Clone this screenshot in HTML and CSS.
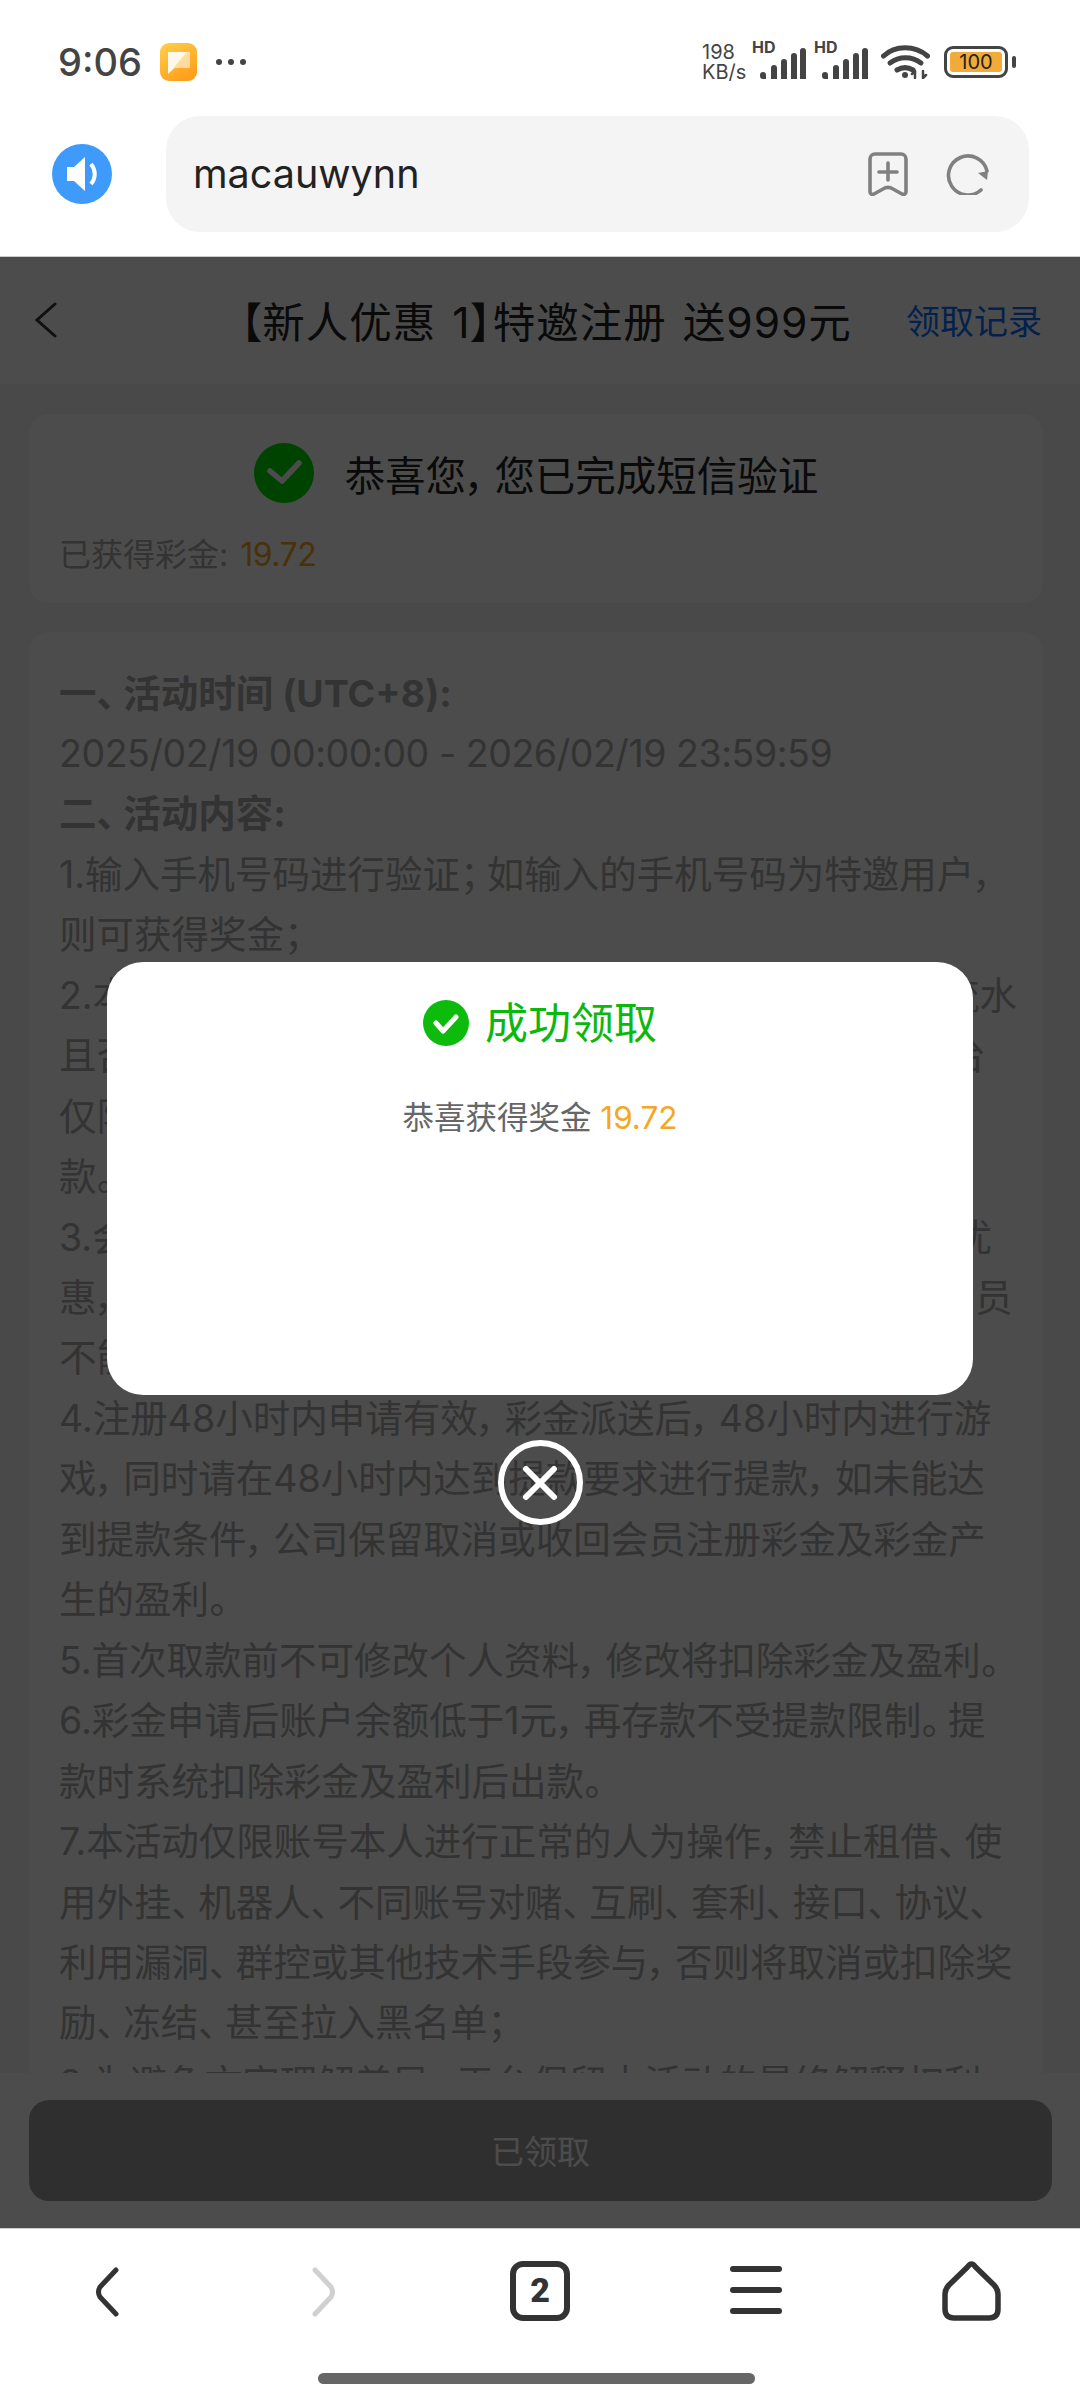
FILE: index.html
```html
<!DOCTYPE html>
<html lang="zh-CN">
<head>
    <meta charset="UTF-8">
    <meta name="viewport" content="width=device-width, initial-scale=1.0">
    <title>新人优惠</title>
    <link rel="stylesheet" href="styles.css">
</head>
<body>
<div class="screen">
    <!-- status bar -->
    <div class="status-bar">
        <div class="status-left">
            <span class="time">9:06</span>
            <svg class="notif-icon" width="37" height="38" viewBox="0 0 37 38">
                <defs>
                    <linearGradient id="notifGrad" x1="0" y1="0" x2="0.6" y2="1">
                        <stop offset="0" stop-color="#ffd04a"/>
                        <stop offset="1" stop-color="#ff9f1c"/>
                    </linearGradient>
                </defs>
                <rect width="37" height="38" rx="9" fill="url(#notifGrad)"/>
                <path d="M8 9h21a1 1 0 0 1 1 1v14a1 1 0 0 1-1 1H15l-7 6z" fill="#fff" opacity="0.55"/>
                <path d="M8 9h19L10 29l-2 2z" fill="#fff" opacity="0.8"/>
            </svg>
            <span class="dots"><i></i><i></i><i></i></span>
        </div>
        <div class="status-right">
            <div class="speed"><span>198</span><span>KB/s</span></div>
            <div class="sim">
                <span class="hd">HD</span>
                <svg width="46" height="31" viewBox="0 0 46 31"><path d="M3 31a3 3 0 0 1-3-3v-1a3 3 0 0 1 6 0v4zM11 31v-11a3 3 0 0 1 6 0v11zM21 31v-17a3 3 0 0 1 6 0v17zM31 31v-23a3 3 0 0 1 6 0v23zM40 31v-28a3 3 0 0 1 6 0v28z" fill="#444"/></svg>
            </div>
            <div class="sim">
                <span class="hd">HD</span>
                <svg width="46" height="31" viewBox="0 0 46 31"><path d="M3 31a3 3 0 0 1-3-3v-1a3 3 0 0 1 6 0v4zM11 31v-11a3 3 0 0 1 6 0v11zM21 31v-17a3 3 0 0 1 6 0v17zM31 31v-23a3 3 0 0 1 6 0v23zM40 31v-28a3 3 0 0 1 6 0v28z" fill="#444"/></svg>
            </div>
            <svg class="wifi" width="49" height="34" viewBox="0 0 49 34" fill="none" stroke="#444" stroke-width="5" stroke-linecap="round">
                <path d="M2.500 11C14 0 34 0 46.500 11"/>
                <path d="M9 18c9-7 22-7 31 0"/>
                <path d="M16 25c5-3 11-3 16 0"/>
                <circle cx="24" cy="30" r="3" fill="#444" stroke="none"/>
                <path d="M34 26v7M31 29l3-3M42 26v7M42 33l3-3" stroke-width="2.500"/>
            </svg>
            <div class="battery">
                <div class="battery-body"><span>100</span></div>
                <i class="battery-nub"></i>
            </div>
        </div>
    </div>

    <!-- browser bar -->
    <div class="browser-bar">
        <svg class="speaker" width="60" height="60" viewBox="0 0 60 60">
            <circle cx="30" cy="30" r="30" fill="#3f9bfb"/>
            <path d="M15 23h7l11-10v34l-11-10h-7z" fill="#fff"/>
            <path d="M39 20c5 6 5 14 0 20" fill="none" stroke="#fff" stroke-width="4"/>
        </svg>
        <div class="url-box">
            <span class="url-text">macauwynn</span>
            <div class="url-icons">
                <svg width="40" height="44" viewBox="0 0 40 44" fill="none" stroke="#808080" stroke-width="3.6" stroke-linecap="round" stroke-linejoin="round">
                    <path d="M7 2h26a5 5 0 0 1 5 5v33c0 2-2 3-4 2l-9-5c-3-2-7-2-10 0l-9 5c-2 1-4 0-4-2V7a5 5 0 0 1 5-5z"/>
                    <path d="M20 11v17M11 20h18"/>
                </svg>
                <svg width="43" height="42" viewBox="0 0 43 42" fill="none" stroke="#808080" stroke-width="3.6" stroke-linecap="round">
                    <path d="M35 37A19.5 19.5 0 1 1 41 18"/>
                    <path d="M32 20l9 7 1-9z" fill="#808080" stroke="none"/>
                </svg>
            </div>
        </div>
    </div>

    <!-- page -->
    <div class="page">
        <div class="page-header">
            <svg class="header-back" width="24" height="36" viewBox="0 0 24 36" fill="none" stroke="#333" stroke-width="3" stroke-linecap="round"><path d="M21 2L3 18l18 16"/></svg>
            <h1 class="header-title">【新人优惠 1】特邀注册 送999元</h1>
            <a class="header-link">领取记录</a>
        </div>

        <div class="page-scroll">
            <div class="card card-status">
                <div class="verify-row">
                    <svg width="60" height="60" viewBox="0 0 60 60">
                        <circle cx="30" cy="30" r="30" fill="#00e000"/>
                        <path d="M16 28l12 10 17-18" fill="none" stroke="#fff" stroke-width="5.500" stroke-linecap="round" stroke-linejoin="round"/>
                    </svg>
                    <span>恭喜您<span class="pu">，</span>您已完成短信验证</span>
                </div>
                <p class="earned">已获得彩金: <span class="amount">19.72</span></p>
            </div>

            <div class="card card-rules">
                <p><b>一<span class="pu">、</span>活动时间 (UTC+8):</b></p>
                <p class="date-range">2025/02/19 00:00:00 - 2026/02/19 23:59:59</p>
                <p><b>二<span class="pu">、</span>活动内容:</b></p>
                <p>1.输入手机号码进行验证<span class="pu">；</span>如输入的手机号码为特邀用户<span class="pu">，</span><br>则可获得奖金<span class="pu">；</span></p>
                <p>2.本活动需在指定场馆完成彩金100%的相应倍数有效流水<br>且否则无法进行提款<span class="pu">，</span>彩金可在所有指定场馆使用本平台<br>仅限会员本人账号参与<span class="pu">，</span>满足条件后方可申请提<br>款<span class="pu">。</span></p>
                <p>3.会员需保证账户信息真实有效且每位会员仅可享一次优<br>惠<span class="pu">，</span>同一设备<span class="pu">、</span>同一银行卡及同一手机号码仅限一位新会员<br>不能重复申请<span class="pu">，</span>违规者将被取消活动资格<span class="pu">。</span></p>
                <p>4.注册48小时内申请有效<span class="pu">，</span>彩金派送后<span class="pu">，</span>48小时内进行游<br>戏<span class="pu">，</span>同时请在48小时内达到提款要求进行提款<span class="pu">，</span>如未能达<br>到提款条件<span class="pu">，</span>公司保留取消或收回会员注册彩金及彩金产<br>生的盈利<span class="pu">。</span></p>
                <p>5.首次取款前不可修改个人资料<span class="pu">，</span>修改将扣除彩金及盈利<span class="pu">。</span></p>
                <p>6.彩金申请后账户余额低于1元<span class="pu">，</span>再存款不受提款限制<span class="pu">。</span>提<br>款时系统扣除彩金及盈利后出款<span class="pu">。</span></p>
                <p>7.本活动仅限账号本人进行正常的人为操作<span class="pu">，</span>禁止租借<span class="pu">、</span>使<br>用外挂<span class="pu">、</span>机器人<span class="pu">、</span>不同账号对赌<span class="pu">、</span>互刷<span class="pu">、</span>套利<span class="pu">、</span>接口<span class="pu">、</span>协议<span class="pu">、</span><br>利用漏洞<span class="pu">、</span>群控或其他技术手段参与<span class="pu">，</span>否则将取消或扣除奖<br>励<span class="pu">、</span>冻结<span class="pu">、</span>甚至拉入黑名单<span class="pu">；</span></p>
                <p>8.为避免文字理解差异<span class="pu">，</span>平台保留本活动的最终解释权利</p>
            </div>
        </div>

        <div class="page-footer">
            <button class="claim-btn">已领取</button>
        </div>

        <!-- modal -->
        <div class="overlay">
            <div class="modal">
                <div class="modal-title">
                    <svg width="46" height="46" viewBox="0 0 46 46">
                        <circle cx="23" cy="23" r="23" fill="#0cbb0c"/>
                        <path d="M13 23l7 8 13-14" fill="none" stroke="#fff" stroke-width="5" stroke-linecap="round" stroke-linejoin="round"/>
                    </svg>
                    <span>成功领取</span>
                </div>
                <p class="modal-text">恭喜获得奖金 <span class="amount">19.72</span></p>
            </div>
            <div class="modal-close">
                <svg width="36" height="36" viewBox="0 0 36 36" stroke="#fff" stroke-width="6" stroke-linecap="round"><path d="M4 4l28 28M32 4L4 32"/></svg>
            </div>
        </div>
    </div>

    <!-- bottom nav -->
    <div class="bottom-nav">
        <div class="nav-icons">
            <svg class="nav-back" width="26" height="50" viewBox="0 0 26 50" fill="none" stroke="#333" stroke-width="5" stroke-linecap="round" stroke-linejoin="round"><path d="M22 3L6 20q-3 5 0 10l16 17"/></svg>
            <svg class="nav-forward" width="26" height="50" viewBox="0 0 26 50" fill="none" stroke="#d0d0d0" stroke-width="5" stroke-linecap="round" stroke-linejoin="round"><path d="M4 3l16 17q3 5 0 10L4 47"/></svg>
            <div class="nav-tabs">2</div>
            <div class="nav-menu"><i></i><i></i><i></i></div>
            <svg class="nav-home" width="59" height="60" viewBox="0 0 59 60" fill="none" stroke="#333" stroke-width="5.5" stroke-linejoin="round"><path d="M29.5 3q2 0 4 3L52 24q4 4 4 9v15q0 9-9 9H12q-9 0-9-9V33q0-5 4-9L25.5 6q2-3 4-3z"/></svg>
        </div>
        <div class="home-bar"></div>
    </div>
</div>
</body>
</html>
```

FILE: styles.css
```css
* {
    box-sizing: border-box;
}
body {
    margin: 0;
    background: #fff;
    font-family: Inter, "Noto Sans CJK SC", sans-serif;
    font-feature-settings: "palt";
}
p, h1 {
    margin: 0;
}
.screen {
    width: 1080px;
    height: 2400px;
    display: flex;
    flex-direction: column;
    overflow: hidden;
}
/* full stops and commas are a bit wider than the trimmed glyphs */
.pu {
    margin-right: 8px;
}

/* status bar */
.status-bar {
    height: 116px;
    padding: 8px 64px 0 58px;
    display: flex;
    justify-content: space-between;
    align-items: center;
    color: #444;
    flex-shrink: 0;
}
.status-left {
    display: flex;
    align-items: center;
}
.time {
    font-size: 38px;
    font-weight: 500;
    width: 82px;
    white-space: nowrap;
}
.notif-icon {
    margin-left: 20px;
}
.dots {
    margin-left: 19px;
    display: flex;
    gap: 6px;
}
.dots i {
    width: 6px;
    height: 6px;
    border-radius: 50%;
    background: #444;
}
.status-right {
    display: flex;
    align-items: center;
}
.speed {
    width: 44px;
    font-size: 20px;
    line-height: 20px;
    display: flex;
    flex-direction: column;
    white-space: nowrap;
}
.sim {
    position: relative;
    width: 46px;
    height: 34px;
    margin-left: 14px;
    display: flex;
    align-items: flex-end;
}
.sim + .sim {
    margin-left: 16px;
}
.hd {
    position: absolute;
    left: -8px;
    top: -6px;
    font-size: 16px;
    line-height: 16px;
    font-weight: 700;
}
.wifi {
    margin-left: 13px;
}
.battery {
    margin-left: 14px;
    display: flex;
    align-items: center;
}
.battery-body {
    width: 64px;
    height: 32px;
    padding: 3px;
    border: 3px solid #444;
    border-radius: 9px;
}
.battery-body span {
    display: block;
    height: 100%;
    background: #f2aa38;
    border-radius: 3px;
    color: #222;
    font-size: 20px;
    line-height: 20px;
    text-align: center;
}
.battery-nub {
    width: 4px;
    height: 12px;
    margin-left: 4px;
    background: #444;
    border-radius: 2px;
}

/* browser bar */
.browser-bar {
    height: 140px;
    padding-left: 52px;
    padding-bottom: 24px;
    display: flex;
    align-items: center;
    flex-shrink: 0;
}
.speaker {
    margin-right: 54px;
}
.url-box {
    width: 863px;
    height: 116px;
    padding: 0 40px 0 27px;
    background: #f4f4f4;
    border-radius: 34px;
    display: flex;
    justify-content: space-between;
    align-items: center;
}
.url-text {
    font-size: 39.5px;
    color: #222;
}
.url-icons {
    display: flex;
    align-items: center;
    gap: 38px;
}

/* page */
.page {
    position: relative;
    flex: 1;
    min-height: 0;
    display: flex;
    flex-direction: column;
    background: #f5f5f5;
    border-top: 1px solid #ccc;
}
.page-header {
    height: 127px;
    padding: 0 38px 2px 34px;
    background: #fff;
    display: flex;
    justify-content: space-between;
    align-items: center;
    flex-shrink: 0;
}
.header-title {
    margin-left: 128px;
    font-size: 42.5px;
    font-weight: 400;
    letter-spacing: 1px;
    word-spacing: 3px;
    color: #222;
    white-space: nowrap;
}
.header-link {
    font-size: 34px;
    color: #0a70ff;
}
.page-scroll {
    flex: 1;
    min-height: 0;
    padding: 30px 37px 0 29px;
    overflow: hidden;
}
.card {
    background: #fff;
    border-radius: 20px;
    padding: 0 30px;
}
.card-status {
    height: 189px;
    padding-top: 29px;
    margin-bottom: 29px;
}
.verify-row {
    display: flex;
    justify-content: center;
    align-items: center;
    gap: 31px;
    font-size: 40.5px;
    color: #222;
}
.earned {
    margin-top: 30px;
    font-size: 32px;
    line-height: 44px;
    color: #aaa;
}
.earned .amount {
    margin-left: 3px;
    letter-spacing: -0.5px;
}
.amount {
    color: #f5a623;
}
.card-rules {
    padding-top: 31.5px;
    font-size: 37.5px;
    line-height: 60.45px;
    color: #aaa;
    white-space: nowrap;
}
.date-range {
    letter-spacing: -0.45px;
}
.page-footer {
    height: 155px;
    padding: 27px 28px 27px 29px;
    background: #fff;
    flex-shrink: 0;
}
.claim-btn {
    width: 100%;
    height: 101px;
    padding: 0 0 2px;
    border: none;
    border-radius: 20px;
    background: #9d9d9d;
    color: #fff;
    font-family: inherit;
    font-size: 33px;
}

/* modal */
.overlay {
    position: absolute;
    inset: 0;
    background: rgba(0, 0, 0, 0.7);
    display: flex;
    flex-direction: column;
    align-items: center;
    justify-content: center;
    padding-top: 2px;
}
.modal {
    width: 866px;
    height: 433px;
    padding-top: 37px;
    background: #fff;
    border-radius: 36px;
}
.modal-title {
    display: flex;
    justify-content: center;
    align-items: center;
    gap: 16px;
    font-size: 43px;
    line-height: 48px;
    color: #0cb80c;
}
.modal-text {
    margin-top: 49px;
    text-align: center;
    font-size: 31.5px;
    line-height: 44px;
    color: #666;
}
.modal-close {
    width: 85px;
    height: 85px;
    margin-top: 45px;
    border: 6px solid #fff;
    border-radius: 50%;
    display: flex;
    justify-content: center;
    align-items: center;
}

/* bottom nav */
.bottom-nav {
    height: 172px;
    background: #fff;
    border-top: 1px solid #ccc;
    flex-shrink: 0;
    display: flex;
    flex-direction: column;
}
.nav-icons {
    height: 144px;
    padding: 32px 0 0 94px;
    display: flex;
    align-items: flex-start;
}
.nav-back {
    margin-top: 6px;
}
.nav-forward {
    margin: 6px 0 0 191px;
}
.nav-tabs {
    width: 60px;
    height: 60px;
    margin-left: 173px;
    border: 6px solid #333;
    border-radius: 13px;
    font-family: Roboto, sans-serif;
    font-size: 34px;
    line-height: 46px;
    font-weight: 900;
    text-align: center;
    color: #333;
}
.nav-menu {
    width: 52px;
    margin: 5px 0 0 160px;
    display: flex;
    flex-direction: column;
    gap: 15px;
}
.nav-menu i {
    height: 6px;
    border-radius: 3px;
    background: #333;
}
.nav-home {
    margin-left: 160px;
}
.home-bar {
    width: 437px;
    height: 11px;
    margin-left: 318px;
    background: #666;
    border-radius: 6px;
}
```
